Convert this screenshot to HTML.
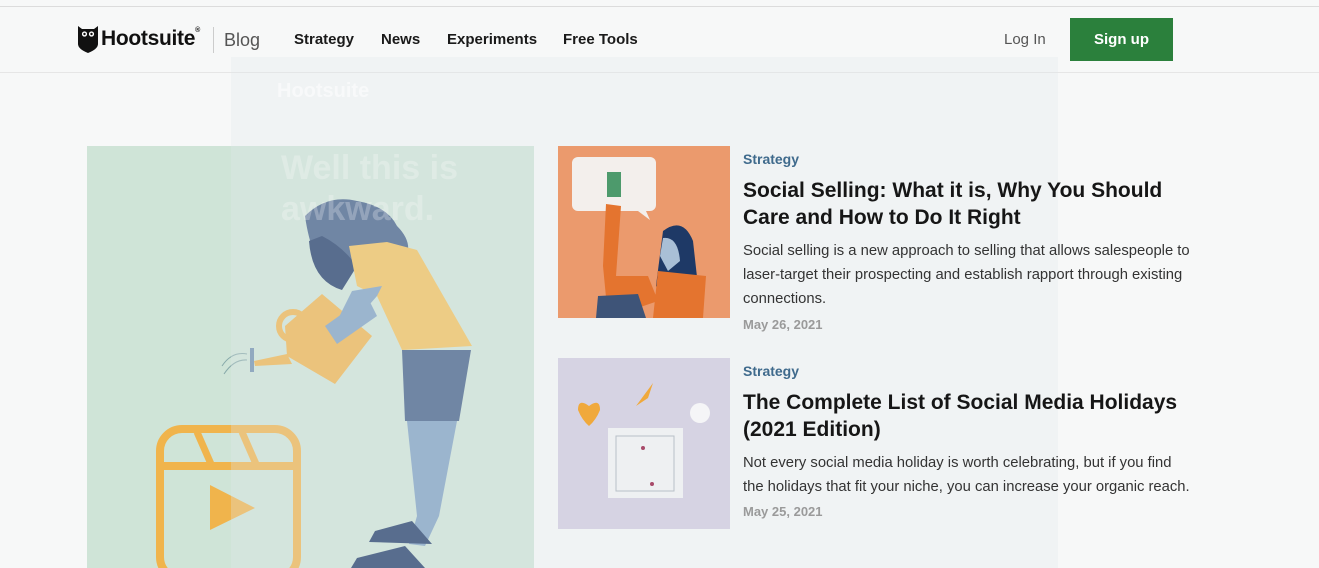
<!DOCTYPE html>
<html><head><meta charset="utf-8"><style>
*{margin:0;padding:0;box-sizing:border-box}
body{width:1319px;height:568px;overflow:hidden;background:#f7f8f8;font-family:"Liberation Sans",sans-serif;position:relative}
.a{position:absolute}
.nav{font-size:15px;font-weight:bold;color:#1a1a1a;top:31px}
.cat{font-size:14px;font-weight:bold;color:#3f6a8c}
.tt{font-size:21px;font-weight:bold;color:#161616;line-height:27px}
.bd{font-size:14.8px;color:#333;line-height:24px}
.dt{font-size:13px;color:#9a9a9a;font-weight:bold}
</style></head><body>
<div class="a" style="left:0;top:6px;width:1319px;height:1px;background:#dcdcdc"></div>
<div class="a" style="left:0;top:72px;width:1319px;height:1px;background:#e6e6e6"></div>
<svg class="a" style="left:78px;top:26px" width="20" height="27" viewBox="0 0 20 27"><path d="M0 0 L4 3 L16 3 L20 0 L20 18 Q20 23 10 27 Q0 23 0 18Z" fill="#111"/><circle cx="6.5" cy="8" r="2.6" fill="#fff"/><circle cx="13.5" cy="8" r="2.6" fill="#fff"/><circle cx="6.5" cy="8" r="1.2" fill="#111"/><circle cx="13.5" cy="8" r="1.2" fill="#111"/></svg>
<div class="a" style="left:101px;top:27px;font-size:21px;font-weight:bold;color:#111;letter-spacing:-.3px">Hootsuite<span style="font-size:7px;vertical-align:top">®</span></div>
<div class="a" style="left:213px;top:27px;width:1px;height:26px;background:#ccc"></div>
<div class="a" style="left:224px;top:30px;font-size:18px;color:#555">Blog</div>
<div class="a nav" style="left:294px">Strategy</div>
<div class="a nav" style="left:381px">News</div>
<div class="a nav" style="left:447px">Experiments</div>
<div class="a nav" style="left:563px">Free Tools</div>
<div class="a" style="left:1004px;top:31px;font-size:15px;color:#555">Log In</div>
<div class="a" style="left:1070px;top:18px;width:103px;height:43px;background:#2b803c;color:#fff;font-size:15px;font-weight:bold;text-align:center;line-height:43px">Sign up</div>

<div class="a" style="left:87px;top:146px;width:447px;height:422px;background:#cfe4d7"></div>
<svg class="a" style="left:87px;top:146px" width="447" height="422" viewBox="0 0 447 422">
<rect x="73" y="283" width="137" height="150" rx="22" fill="none" stroke="#f0b44c" stroke-width="8"/>
<line x1="73" y1="320" x2="210" y2="320" stroke="#f0b44c" stroke-width="8"/>
<line x1="110" y1="286" x2="124" y2="318" stroke="#f0b44c" stroke-width="7"/>
<line x1="155" y1="286" x2="169" y2="318" stroke="#f0b44c" stroke-width="7"/>
<path d="M123 339 L168 362 L123 384Z" fill="#f0b44c"/>
<path d="M135 220 Q145 205 160 208 M137 228 Q147 213 160 214" stroke="#8aa" fill="none"/>
<rect x="163" y="202" width="4" height="24" fill="#6f8eae"/>
<path d="M167 215 L200 208 L205 218 L168 220Z" fill="#f0b44c"/>
<circle cx="206" cy="180" r="14" fill="none" stroke="#f0b44c" stroke-width="6"/>
<path d="M198 180 L235 148 L285 190 L248 238 L200 210Z" fill="#f0b44c"/>
<path d="M238 180 L280 150 L290 170 L250 198Z" fill="#7d9fc2"/>
<path d="M218 70 Q240 48 270 55 Q300 60 310 80 Q325 95 320 110 Q300 105 290 100 L250 140 Q225 120 218 70Z" fill="#405c86"/>
<path d="M222 95 Q225 135 255 144 L270 120 Q255 100 235 90Z" fill="#1e3966"/>
<path d="M262 100 L300 96 L330 104 L385 200 L315 204 L290 150 L270 140Z" fill="#f2c15a"/>
<path d="M265 145 L295 140 L290 150 L255 190 L245 185Z" fill="#7d9fc2"/>
<path d="M315 204 L384 204 L372 275 L318 275Z" fill="#405c86"/>
<path d="M320 275 L370 275 L352 370 L338 400 L322 398 L330 370Z" fill="#7d9fc2"/>
<path d="M288 385 L325 375 L345 398 L282 396Z" fill="#1e3966"/>
<path d="M270 412 L318 400 L338 422 L264 422Z" fill="#1e3966"/>
</svg>
<div class="a" style="left:231px;top:57px;width:827px;height:511px;background:rgba(225,232,236,.3)"></div>
<div class="a" style="left:277px;top:80px;font-size:20px;font-weight:bold;color:rgba(255,255,255,.5)">Hootsuite</div>
<div class="a" style="left:281px;top:148px;font-size:34px;font-weight:bold;color:rgba(255,255,255,.25);line-height:41px">Well this is<br>awkward.</div>

<div class="a" style="left:558px;top:146px;width:172px;height:172px;background:#eb9a6d"></div>
<svg class="a" style="left:558px;top:146px" width="172" height="172"><rect x="14" y="11" width="84" height="54" rx="6" fill="#f3efec"/><path d="M80 65 L92 74 L88 65Z" fill="#f3efec"/><rect x="49" y="26" width="14" height="25" fill="#4d9a6c"/><path d="M48 58 L63 60 L58 130 L90 130 L100 155 L50 172 L45 120Z" fill="#e4742f"/><path d="M105 85 Q125 70 135 95 L140 140 L115 165 L98 140Z" fill="#1e3966"/><path d="M105 92 Q120 90 122 115 L110 125 L102 110Z" fill="#a9bfd6"/><path d="M100 125 L148 130 L145 172 L95 172Z" fill="#e4742f"/><path d="M40 150 L80 148 L88 172 L38 172Z" fill="#3e5478"/></svg>
<div class="a" style="left:558px;top:358px;width:172px;height:171px;background:#d6d3e3"></div>
<svg class="a" style="left:558px;top:358px" width="172" height="171"><path d="M31 48 Q20 40 20 52 Q24 62 31 68 Q38 62 42 52 Q42 40 31 48Z" fill="#f0a93c"/><path d="M78 48 L95 25 L90 40Z" fill="#f0a93c"/><circle cx="142" cy="55" r="10" fill="#f5f5f7"/><rect x="50" y="70" width="75" height="70" fill="#eef0f2"/><rect x="58" y="78" width="58" height="55" fill="none" stroke="#b8c0c8"/><circle cx="85" cy="90" r="2" fill="#a84a6a"/><circle cx="94" cy="126" r="2" fill="#a84a6a"/></svg>

<div class="a cat" style="left:743px;top:151px">Strategy</div>
<div class="a tt" style="left:743px;top:177px">Social Selling: What it is, Why You Should<br>Care and How to Do It Right</div>
<div class="a bd" style="left:743px;top:239px">Social selling is a new approach to selling that allows salespeople to<br>laser-target their prospecting and establish rapport through existing<br>connections.</div>
<div class="a dt" style="left:743px;top:317px">May 26, 2021</div>
<div class="a cat" style="left:743px;top:363px">Strategy</div>
<div class="a tt" style="left:743px;top:389px">The Complete List of Social Media Holidays<br>(2021 Edition)</div>
<div class="a bd" style="left:743px;top:451px">Not every social media holiday is worth celebrating, but if you find<br>the holidays that fit your niche, you can increase your organic reach.</div>
<div class="a dt" style="left:743px;top:504px">May 25, 2021</div>
</body></html>
